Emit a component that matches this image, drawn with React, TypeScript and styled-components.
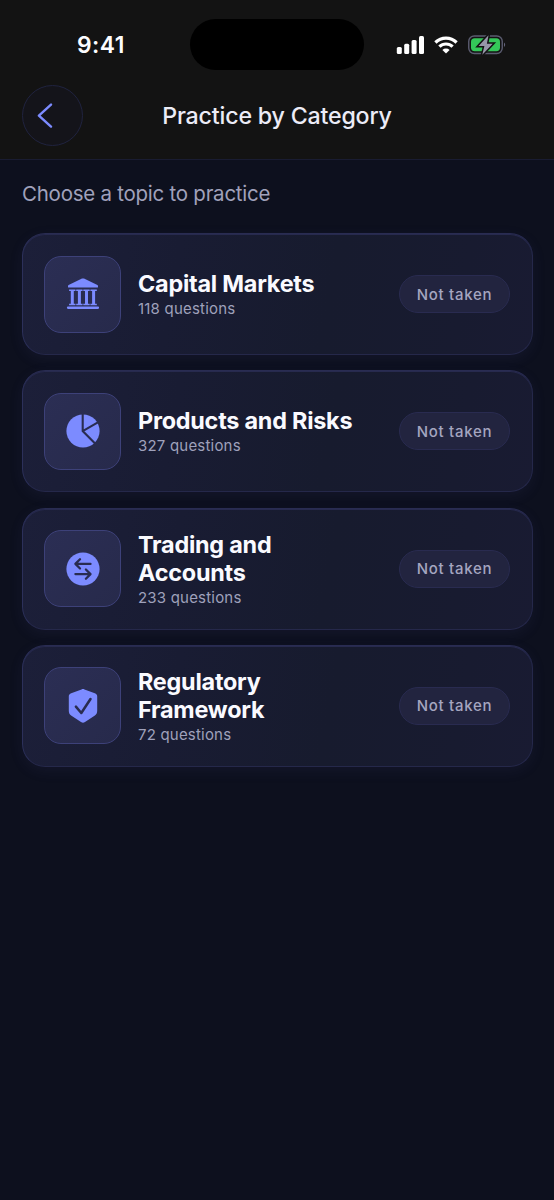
import React from 'react';
import styled, { createGlobalStyle } from 'styled-components';

const GlobalStyle = createGlobalStyle`
  *, *::before, *::after { box-sizing: border-box; }
  body {
    margin: 0;
    background: #0d101e;
    font-family: Inter, "Liberation Sans", sans-serif;
    -webkit-font-smoothing: antialiased;
  }
`;

const Screen = styled.div`
  width: 554px;
  height: 1200px;
  overflow: hidden;
  background: #0d101e;
`;

const Header = styled.header`
  height: 160px;
  background: #131313;
  border-bottom: 1px solid #191c32;
`;

const StatusBar = styled.div`
  height: 85px;
  padding: 19px 48px 0 77px;
  display: grid;
  grid-template-columns: 113px 174px 1fr;
  align-items: start;
`;

const Clock = styled.span`
  font-size: 22.8px;
  font-weight: 600;
  line-height: 51px;
  letter-spacing: 0.45px;
  color: #fcfcff;
`;

const Island = styled.div`
  height: 51px;
  border-radius: 26px;
  background: #000;
`;

const StatusIcons = styled.div`
  height: 51px;
  display: flex;
  align-items: center;
  justify-content: flex-end;
  gap: 10px;
`;

const NavBar = styled.div`
  height: 61px;
  padding: 0 22px;
  display: grid;
  grid-template-columns: 61px 1fr 61px;
  align-items: center;
`;

const BackButton = styled.button`
  width: 61px;
  height: 61px;
  padding: 0 15px 0 0;
  display: flex;
  align-items: center;
  justify-content: center;
  border: 1px solid #20233f;
  border-radius: 50%;
  background: #14141a;
`;

const NavTitle = styled.h1`
  margin: 0;
  text-align: center;
  font-size: 23.2px;
  font-weight: 500;
  line-height: 28px;
  letter-spacing: -0.18px;
  white-space: nowrap;
  color: #ececf7;
`;

const Content = styled.main`
  padding: 20px 21px 0 22px;
`;

const Intro = styled.p`
  margin: 0 0 25px;
  font-size: 20.5px;
  line-height: 28px;
  letter-spacing: -0.25px;
  color: #a0a1bb;
`;

const TopicList = styled.ul`
  margin: 0;
  padding: 0;
  display: flex;
  flex-direction: column;
  gap: 15.3px;
  list-style: none;
`;

const TopicCard = styled.li`
  height: 122px;
  padding: 0 22px 0 21px;
  display: flex;
  align-items: center;
  border: 1px solid #25284a;
  border-top-color: #292c52;
  border-left-color: #2c305a;
  border-radius: 23px;
  background: linear-gradient(100deg, #1c1f39 0%, #191c33 30%, #171b2e 60%, #181b30 85%, #191b32 100%);
  box-shadow: inset 0 1px 0 #272a4e, 0 4px 14px rgba(70, 76, 145, 0.11);
`;

const IconTile = styled.div`
  flex: none;
  width: 77px;
  height: 77px;
  display: flex;
  align-items: center;
  justify-content: center;
  border: 1px solid #3d4179;
  border-radius: 17px;
  background: linear-gradient(135deg, #2b2e54, #272a4b);
`;

const TopicText = styled.div`
  width: 240px;
  margin-left: 17px;
  padding-top: 1px;
`;

const TopicName = styled.h2`
  margin: 0;
  font-size: 23.4px;
  font-weight: 650;
  line-height: 28px;
  letter-spacing: -0.23px;
  white-space: pre-line;
  color: #fafaff;
`;

const TopicCount = styled.p`
  margin: 1px 0 0;
  font-size: 15px;
  line-height: 20px;
  letter-spacing: 0.2px;
  color: #9fa1bb;
`;

const StatusPill = styled.span`
  width: 111px;
  height: 38px;
  margin-left: auto;
  display: flex;
  align-items: center;
  justify-content: center;
  border: 1px solid #292b50;
  border-radius: 19px;
  background: #22243f;
  font-size: 15px;
  font-weight: 500;
  letter-spacing: 0.7px;
  white-space: nowrap;
  color: #a5a6c0;
`;

const ACCENT = '#7c8bff';
const TILE = '#292c50';

const SignalIcon = () => (
  <svg width="28" height="18" viewBox="0 0 28 18" fill="#fff">
    <rect x="0.8" y="11" width="5" height="7" rx="1.5" />
    <rect x="8.2" y="7.7" width="5" height="10.3" rx="1.5" />
    <rect x="15.6" y="4" width="5" height="14" rx="1.5" />
    <rect x="23" y="0" width="5" height="18" rx="1.5" />
  </svg>
);

const WifiIcon = () => (
  <svg width="24" height="18" viewBox="0 0 24 18" fill="none" stroke="#fff" strokeWidth="3.2">
    <path d="M1.4 6.5a15.2 15.2 0 0 1 21.2 0" />
    <path d="M5.4 10.7a9.4 9.4 0 0 1 13.2 0" />
    <path d="M8.4 13.9a5.1 5.1 0 0 1 7.2 0L12 17.5Z" fill="#fff" stroke="none" />
  </svg>
);

const BatteryIcon = () => (
  <svg width="38" height="20" viewBox="0 0 38 20">
    <rect x="0.75" y="1" width="33.5" height="17.5" rx="5.5" fill="none" stroke="#5b5c70" strokeWidth="1.4" />
    <rect x="3" y="3.2" width="29" height="13.1" rx="3.7" fill="#34c759" />
    <path d="M36 7.5c1.6.7 1.6 3.8 0 4.5Z" fill="#626378" />
    <path d="M20.5.2 10.6 11h5.8l-2.1 8.7L24.7 8.7h-5.8Z" fill="#9797a9" stroke="#131313" strokeWidth="3" paintOrder="stroke" />
  </svg>
);

const ChevronIcon = () => (
  <svg width="16" height="26" viewBox="0 0 16 26" fill="none" stroke={ACCENT} strokeWidth="2.4" strokeLinecap="round" strokeLinejoin="round">
    <path d="M14 1.6 1.9 12.6 14 23.6" />
  </svg>
);

const BankIcon = () => (
  <svg width="34" height="34" viewBox="0 0 34 34" fill={ACCENT}>
    <path d="M2 9.9V9c0-.4.2-.7.6-.9L16 1.6c.6-.3 1.4-.3 2 0l13.4 6.5c.4.2.6.5.6.9v.9c0 .4-.3.6-.6.6H2.6c-.3 0-.6-.2-.6-.6Z" />
    {[3.1, 10.2, 17.3, 24.4].map((x) => (
      <path key={x} d={`M${x} 12.4h6.4v1.5H${x + 4.7}v12.8h1.7v1.6H${x}v-1.6h1.7V13.9H${x}Z`} />
    ))}
    <rect x="0.9" y="29.6" width="32.2" height="2.3" rx="1.1" />
  </svg>
);

const PieIcon = () => (
  <svg width="34" height="34" viewBox="0 0 34 34">
    <circle cx="17" cy="17" r="16.6" fill={ACCENT} />
    <path d="M16.7 0v17.1L29.1 29.4M16.7 17.1 32.3 8.2" fill="none" stroke={TILE} strokeWidth="2.1" />
  </svg>
);

const SwapIcon = () => (
  <svg width="34" height="34" viewBox="0 0 34 34">
    <circle cx="17" cy="17" r="16.6" fill={ACCENT} />
    <path
      d="M14 7.3 9.4 11.9l4.6 4.6M9.7 11.9h14.8M19.9 17.5l4.6 4.6-4.6 4.6M24.2 22.1H9.4"
      fill="none" stroke={TILE} strokeWidth="2.3" strokeLinecap="round" strokeLinejoin="round"
    />
  </svg>
);

const ShieldIcon = () => (
  <svg width="34" height="34" viewBox="0 0 34 34">
    <path d="M17 0c.5 0 1 .2 1.5.4L28.8 4.2c1.5.6 2.4 1.4 2.4 3.1v14.1c0 2.2-.6 3.8-2.3 5.1L19 33c-1.4 1-2.6 1-4 0l-9.9-6.5c-1.7-1.3-2.3-2.9-2.3-5.1V7.3c0-1.7.9-2.5 2.4-3.1L15.5.4C16 .2 16.5 0 17 0Z" fill={ACCENT} />
    <path d="m9.9 17.6 5.4 6.4L24.5 10" fill="none" stroke={TILE} strokeWidth="2.5" strokeLinecap="round" strokeLinejoin="round" />
  </svg>
);

const topics = [
  { name: 'Capital Markets', count: 118, Icon: BankIcon },
  { name: 'Products and Risks', count: 327, Icon: PieIcon },
  { name: 'Trading and\nAccounts', count: 233, Icon: SwapIcon },
  { name: 'Regulatory\nFramework', count: 72, Icon: ShieldIcon },
];

export default function App() {
  return (
    <Screen>
      <GlobalStyle />
      <Header>
        <StatusBar>
          <Clock>9:41</Clock>
          <Island />
          <StatusIcons>
            <SignalIcon />
            <WifiIcon />
            <BatteryIcon />
          </StatusIcons>
        </StatusBar>
        <NavBar>
          <BackButton aria-label="Back">
            <ChevronIcon />
          </BackButton>
          <NavTitle>Practice by Category</NavTitle>
        </NavBar>
      </Header>
      <Content>
        <Intro>Choose a topic to practice</Intro>
        <TopicList>
          {topics.map(({ name, count, Icon }) => (
            <TopicCard key={name}>
              <IconTile>
                <Icon />
              </IconTile>
              <TopicText>
                <TopicName>{name}</TopicName>
                <TopicCount>{count} questions</TopicCount>
              </TopicText>
              <StatusPill>Not taken</StatusPill>
            </TopicCard>
          ))}
        </TopicList>
      </Content>
    </Screen>
  );
}
